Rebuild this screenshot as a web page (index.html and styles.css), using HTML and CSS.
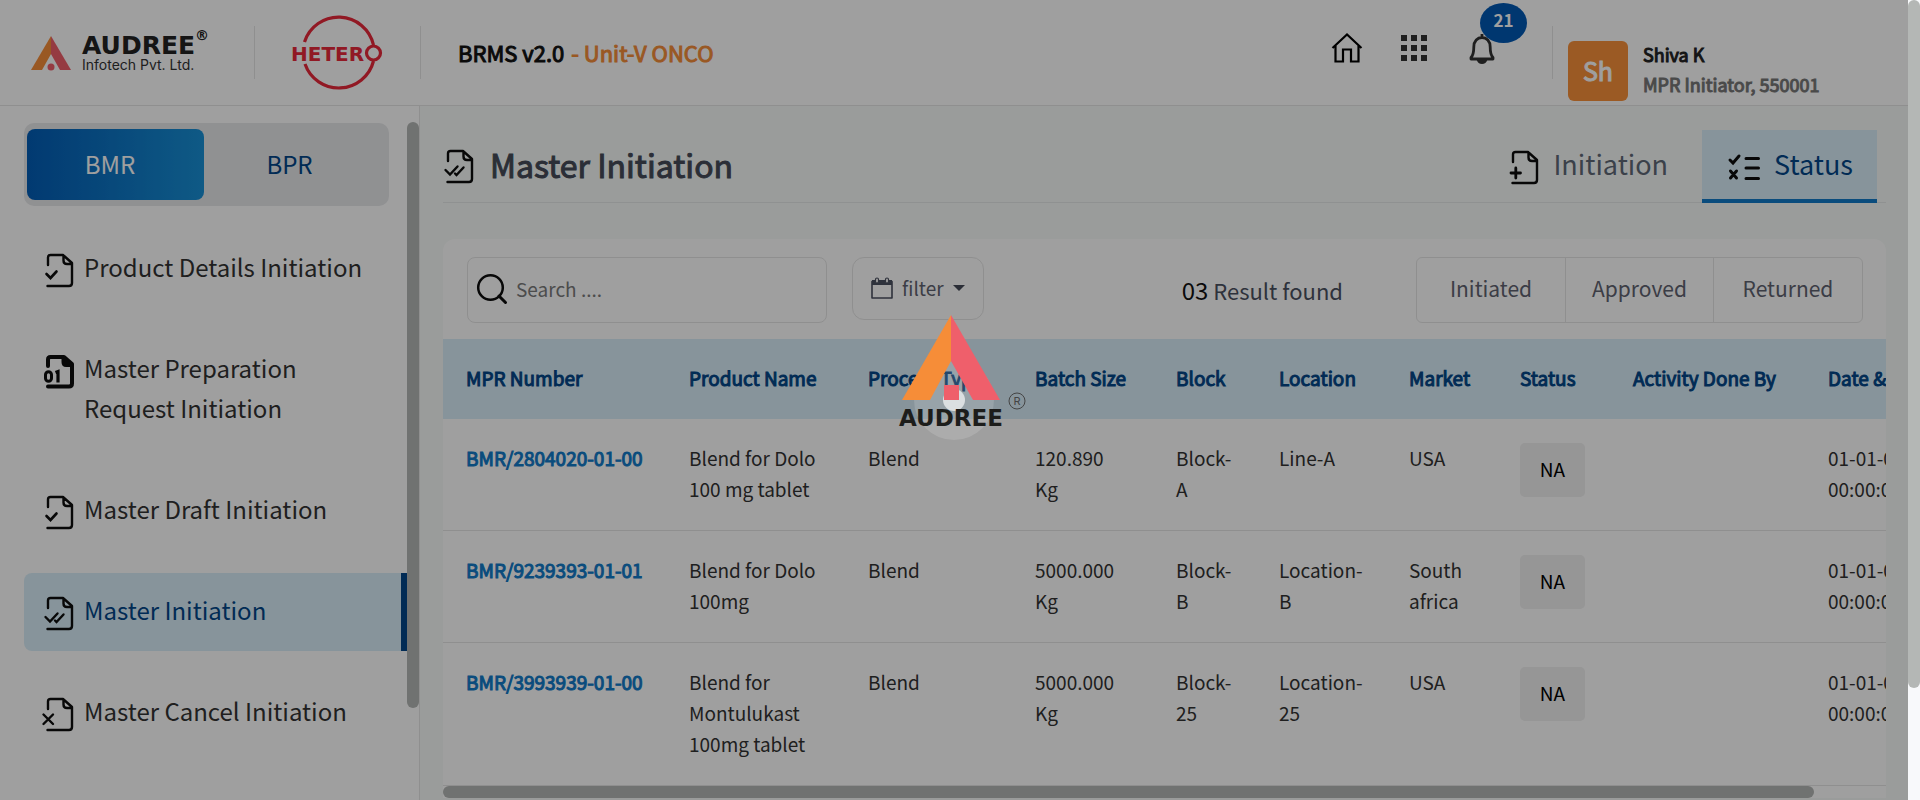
FILE: index.html
```html
<!DOCTYPE html>
<html lang="en">
<head>
<meta charset="utf-8">
<title>BRMS - Master Initiation</title>
<link rel="stylesheet" href="styles.css">
</head>
<body>
<svg class="defs" width="0" height="0" aria-hidden="true">
  <symbol id="doc" viewBox="0 0 34 36">
    <path d="M8 13V5.500Q8 3 10.500 3H23L32 11V31Q32 34 29 34H7.500M23.500 3.500V8.500Q23.500 12 27 12H31.500" fill="none" stroke="currentColor" stroke-width="2.400" stroke-linecap="round" stroke-linejoin="round"/>
  </symbol>
  <symbol id="doc-check" viewBox="0 0 34 36">
    <use href="#doc"/>
    <path d="M6.500 22L10.500 26L16.500 19.500" fill="none" stroke="currentColor" stroke-width="2.600" stroke-linecap="round"/>
  </symbol>
  <symbol id="doc-checks" viewBox="0 0 34 36">
    <use href="#doc"/>
    <path d="M5.500 22L10 26.500L17.500 18.500M15 25.500L16.500 27L23.500 19.500" fill="none" stroke="currentColor" stroke-width="2.400" stroke-linecap="round"/>
  </symbol>
  <symbol id="doc-x" viewBox="0 0 34 36">
    <use href="#doc"/>
    <path d="M3.500 18.500L13 28M13 18.500L3.500 28" fill="none" stroke="currentColor" stroke-width="2.400" stroke-linecap="round"/>
  </symbol>
  <symbol id="doc-plus" viewBox="0 0 34 36">
    <use href="#doc"/>
    <path d="M6 24H15.500M10.800 19V29" fill="none" stroke="currentColor" stroke-width="2.800" stroke-linecap="round"/>
  </symbol>
  <symbol id="doc-binary" viewBox="0 0 34 36">
    <path d="M8 13V6.500Q8 4 10.500 4H24L32 11V30.500Q32 33.500 29 33.500H8" fill="none" stroke="currentColor" stroke-width="4" stroke-linecap="round" stroke-linejoin="round"/>
    <path d="M21.500 4V9Q21.500 14 26 14H33V11L25 4Z" fill="currentColor"/>
    <rect x="5.500" y="18.700" width="6" height="9.600" rx="3" fill="none" stroke="currentColor" stroke-width="3"/>
    <path d="M15.500 19.500L18 18.500V29.500" fill="none" stroke="currentColor" stroke-width="3.200"/>
  </symbol>
</svg>

<div class="page">
<header class="topbar">
  <a class="brand" href="#">
    <svg class="brand-mark" viewBox="0 0 40 34" aria-hidden="true">
      <path d="M20 0L0 34H11L20 18Z" fill="#f68d38"/><path d="M20 0L40 34H29L20 18Z" fill="#ef5f6b"/><circle cx="20" cy="31" r="3.500" fill="#ef5f6b"/>
    </svg>
    <span class="brand-text"><span class="brand-name">AUDREE<span class="brand-reg">®</span></span><span class="brand-sub">Infotech Pvt. Ltd.</span></span>
  </a>
  <div class="client">
    <svg class="hetero" viewBox="0 0 92 76" role="img" aria-label="Hetero">
      <path d="M12.500 28A35.800 35.800 0 0 1 81.500 31M81.500 47A35.800 35.800 0 0 1 13 50" fill="none" stroke="#e8283a" stroke-width="3.200"/>
      <text x="-1" y="47" class="hetero-text">HETER</text>
      <circle cx="81.500" cy="39" r="7" fill="none" stroke="#e8283a" stroke-width="3.200"/>
    </svg>
  </div>
  <p class="app-title">BRMS v2.0 <span class="unit">- Unit-V ONCO</span></p>
  <div class="actions">
    <a href="#" aria-label="Home"><svg class="ic-home" viewBox="0 0 32 30"><path d="M1.500 15L16 1.500L30.500 15M4.500 12.500V28.500H12V16.500H20V28.500H27.500V12.500" fill="none" stroke="#000" stroke-width="2.200"/></svg></a>
    <a href="#" aria-label="Apps"><svg class="ic-grid" viewBox="0 0 26 26"><path d="M0 0h6v6H0zM10 0h6v6h-6zM20 0h6v6h-6zM0 10h6v6H0zM10 10h6v6h-6zM20 10h6v6h-6zM0 20h6v6H0zM10 20h6v6h-6zM20 20h6v6h-6z" fill="#333"/></svg></a>
    <button class="bell" type="button" aria-label="Notifications">
      <svg class="ic-bell" viewBox="0 0 26 32"><path d="M13 1V4M2 24.500C4.500 22 4.800 18.500 4.800 14C4.800 8 8.500 4.500 13 4.500S21.200 8 21.200 14C21.200 18.500 21.500 22 24 24.500V26H2Z" fill="none" stroke="#333" stroke-width="2.800" stroke-linejoin="round"/><path d="M7.500 26.500Q9 31 13 31T18.500 26.500Z" fill="#333"/></svg>
      <span class="count">21</span>
    </button>
  </div>
  <div class="user">
    <span class="avatar">Sh</span>
    <div><p class="user-name">Shiva K</p><p class="user-role">MPR Initiator, 550001</p></div>
  </div>
</header>

<div class="layout">
  <aside class="sidebar">
    <div class="sidebar-scroll">
      <div class="switch"><button class="switch-btn is-on" type="button">BMR</button><button class="switch-btn" type="button">BPR</button></div>
      <nav class="menu">
        <a class="menu-item" href="#"><svg class="doc-icon"><use href="#doc-check"/></svg><span>Product Details Initiation</span></a>
        <a class="menu-item" href="#"><svg class="doc-icon"><use href="#doc-binary"/></svg><span>Master Preparation Request Initiation</span></a>
        <a class="menu-item" href="#"><svg class="doc-icon"><use href="#doc-check"/></svg><span>Master Draft Initiation</span></a>
        <a class="menu-item is-active" href="#"><svg class="doc-icon"><use href="#doc-checks"/></svg><span>Master Initiation</span></a>
        <a class="menu-item" href="#"><svg class="doc-icon"><use href="#doc-x"/></svg><span>Master Cancel Initiation</span></a>
      </nav>
    </div>
    <div class="rail rail-side"><div class="thumb"></div></div>
  </aside>

  <main class="main">
    <div class="page-head">
      <h1 class="page-title"><svg class="doc-icon"><use href="#doc-checks"/></svg><span class="strong">Master Initiation</span></h1>
      <nav class="tabs">
        <a class="tab" href="#"><svg class="doc-icon"><use href="#doc-plus"/></svg><span>Initiation</span></a>
        <a class="tab is-active" href="#"><svg class="ic-list" viewBox="0 0 32 27"><path d="M2 6L5 9L11 2M18 4.500H30.500M18 14H30.500M18 24.500H30.500M2.500 17L8.500 24M8.500 17L2.500 24" fill="none" stroke="#0d0d0d" stroke-width="3" stroke-linecap="round"/></svg><span>Status</span></a>
      </nav>
    </div>

    <section class="card">
      <div class="toolbar">
        <label class="search"><svg class="ic-search" viewBox="0 0 30 30"><circle cx="13.500" cy="13.500" r="12.300" fill="none" stroke="#0d0d0d" stroke-width="2.500"/><path d="M22 22L28.500 28.500" stroke="#0d0d0d" stroke-width="3" stroke-linecap="round"/></svg><input type="search" placeholder="Search ...." aria-label="Search"></label>
        <button class="filter" type="button"><svg class="ic-cal" viewBox="0 0 22 22"><path d="M1 4.500H21V21H1Z" fill="none" stroke="#4b5060" stroke-width="1.600" stroke-linejoin="round"/><path d="M1 3H21V8H1Z" fill="#4b5060"/><rect x="4.500" y="1" width="3" height="5" rx="1.500" fill="#fff" stroke="#4b5060" stroke-width="1.200"/><rect x="14.500" y="1" width="3" height="5" rx="1.500" fill="#fff" stroke="#4b5060" stroke-width="1.200"/></svg>filter<span class="caret"></span></button>
        <p class="results"><span class="results-count">03</span> Result found</p>
        <div class="segments"><button type="button">Initiated</button><button type="button">Approved</button><button type="button">Returned</button></div>
      </div>
      <div class="table-scroll">
        <table class="grid">
          <colgroup><col class="w-mpr"><col class="w-product"><col class="w-process"><col class="w-batch"><col class="w-block"><col class="w-location"><col class="w-market"><col class="w-status"><col class="w-done"><col class="w-date"></colgroup>
          <thead><tr><th>MPR Number</th><th>Product Name</th><th>Process Type</th><th>Batch Size</th><th>Block</th><th>Location</th><th>Market</th><th>Status</th><th>Activity Done By</th><th>Date &amp; Time</th></tr></thead>
          <tbody>
            <tr><td><a href="#">BMR/2804020-01-00</a></td><td>Blend for Dolo 100 mg tablet</td><td>Blend</td><td>120.890 Kg</td><td>Block-A</td><td>Line-A</td><td>USA</td><td class="status"><span class="pill">NA</span></td><td></td><td>01-01-0001 00:00:00</td></tr>
            <tr><td><a href="#">BMR/9239393-01-01</a></td><td>Blend for Dolo 100mg</td><td>Blend</td><td>5000.000 Kg</td><td>Block-B</td><td>Location-B</td><td>South africa</td><td class="status"><span class="pill">NA</span></td><td></td><td>01-01-0001 00:00:00</td></tr>
            <tr><td><a href="#">BMR/3993939-01-00</a></td><td>Blend for Montulukast 100mg tablet</td><td>Blend</td><td>5000.000 Kg</td><td>Block-25</td><td>Location-25</td><td>USA</td><td class="status"><span class="pill">NA</span></td><td></td><td>01-01-0001 00:00:00</td></tr>
          </tbody>
        </table>
      </div>
      <div class="rail rail-table"><div class="thumb"></div></div>
    </section>
  </main>
</div>

<div class="overlay" role="status" aria-label="Loading">
  <svg class="loader" viewBox="0 0 130 126">
    <circle cx="54" cy="86" r="40" fill="#fff" fill-opacity=".14"/>
    <circle cx="54" cy="86" r="11" fill="#fff" fill-opacity=".65"/>
    <path d="M51 1L2 86H30L51 47Z" fill="#f68d38"/><path d="M51 1L100 86H73L51 47Z" fill="#ef5f6b"/>
    <path d="M44 71H59V86H44Z" fill="#ef5f6b"/>
    <text x="-1" y="112" class="loader-name">AUDREE</text>
    <circle cx="117" cy="87" r="8" fill="none" stroke="#444" stroke-width="1"/>
    <text x="117" y="91" class="loader-reg">R</text>
  </svg>
</div>
</div>
<div class="rail rail-page"><div class="thumb"></div></div>
</body>
</html>
```

FILE: styles.css
```css
* { box-sizing: border-box; }

body {
  margin: 0;
  height: 100vh;
  overflow: hidden;
  display: grid;
  grid-template-columns: minmax(0, 1fr) 12px;
  grid-template-rows: 100vh;
  background: #f8f9fb;
  color: #333;
  font-family: "Noto Sans CJK SC", "Noto Sans", sans-serif;
  font-size: 19px;
  line-height: 31px;
}

p, h1 { margin: 0; }
a { color: inherit; text-decoration: none; }
button { font: inherit; color: inherit; background: none; border: 0; padding: 0; }
svg { display: block; flex: none; overflow: visible; }
.defs { position: absolute; }
.doc-icon { width: 34px; height: 36px; color: #0d0d0d; }

/* Scroll rails */
.thumb { border-radius: 6px; background: #b4b7b5; }
.rail-page .thumb { height: 86%; }
.rail-side .thumb { height: 586px; }
.rail-table .thumb { width: 95%; height: 12px; }

/* Top bar */
.page {
  position: relative;
  display: flex;
  flex-direction: column;
  overflow: hidden;
  background: #f7fbf9;
}
.topbar {
  flex: none;
  display: flex;
  align-items: flex-start;
  height: 106px;
  background: #fff;
  border-bottom: 1px solid #e6e6e6;
}
.brand {
  display: flex;
  gap: 11px;
  width: 255px;
  height: 53px;
  margin-top: 26px;
  padding: 10px 0 0 31px;
  border-right: 1px solid #e6e6e6;
}
.brand-mark { width: 40px; height: 34px; }
.brand-text { display: flex; flex-direction: column; }
.brand-name { position: relative; font: 700 25px/20px "DejaVu Sans", sans-serif; color: #222; }
.brand-reg { position: absolute; left: 100%; top: -8px; font-size: 14px; line-height: 14px; }
.brand-sub { font: 14px/18px Inter, sans-serif; color: #333; white-space: nowrap; }
.client { width: 166px; height: 53px; margin-top: 26px; padding-left: 37px; border-right: 1px solid #e6e6e6; }
.hetero { width: 92px; height: 76px; margin-top: -12px; }
.hetero-text { font: 700 20px "DejaVu Sans", sans-serif; fill: #e8283a; }
.app-title { padding: 37px 0 0 37px; font-size: 22px; color: #111; white-space: pre; -webkit-text-stroke: 1px; }
.unit { margin-left: 2px; color: #f68d38; }
.actions { display: flex; align-items: flex-start; gap: 38px; margin-left: auto; padding-top: 33px; }
.ic-home { width: 32px; height: 30px; }
.ic-grid { width: 26px; height: 26px; margin-top: 2px; }
.bell { position: relative; width: 26px; margin-left: 4px; }
.ic-bell { width: 26px; height: 32px; }
.count {
  position: absolute;
  left: 11px;
  bottom: 22px;
  width: 47px;
  height: 40px;
  border-radius: 50%;
  background: #0058b4;
  color: #fff;
  font-size: 17px;
  line-height: 34px;
  font-weight: 700;
}
.user { display: flex; gap: 15px; width: 356px; height: 53px; margin: 26px 0 0 57px; padding: 15px 0 0 15px; border-left: 1px solid #e6e6e6; }
.avatar { flex: none; width: 60px; height: 60px; border-radius: 6px; background: #f9913a; color: #fff; font-size: 25px; line-height: 58px; text-align: center; -webkit-text-stroke: 1px; }
.user-name, .user-role { font-size: 18px; line-height: 30px; -webkit-text-stroke: 1px; }
.user-name { color: #222; margin-top: -2px; }
.user-role { color: #777; }

/* Sidebar */
.layout { flex: 1; min-height: 0; display: grid; grid-template-columns: 420px minmax(0, 1fr); }
.sidebar { display: grid; grid-template-columns: minmax(0, 1fr) 12px; background: #fff; border-right: 1px solid #e6e6e6; padding-top: 16px; min-height: 0; }
.sidebar-scroll { min-height: 0; overflow: hidden; padding: 1px 0 0 24px; }
.switch { display: grid; grid-template-columns: 177px 1fr; height: 83px; margin-right: 18px; padding: 6px 3px; border-radius: 10px; background: #e7e8eb; }
.switch-btn { padding: 0 11px 2px 0; border-radius: 8px; font-size: 24px; color: #024688; }
.switch-btn.is-on { background: linear-gradient(90deg, #035db6, #1890d6); color: #fff; }
.menu { display: flex; flex-direction: column; gap: 23px; margin-top: 24px; }
.menu-item { display: flex; align-items: flex-start; gap: 10px; padding: 17px 20px 21px 16px; font-size: 24px; line-height: 40px; border-right: 6px solid transparent; }
.menu-item .doc-icon { margin: 5px 0 -1px; }
.menu-item.is-active { border-right-color: #024688; border-radius: 8px 0 0 8px; background: #d9eef9; color: #024688; }

/* Main */
.main { min-height: 0; padding: 24px 22px 0 23px; }
.page-head { display: flex; justify-content: space-between; height: 73px; border-bottom: 1px solid #e6e9e8; }
.page-title { display: flex; align-items: center; gap: 16px; margin-left: -3px; color: #454b58; font-size: 32px; font-weight: 400; }
.page-title .strong { padding-bottom: 3px; -webkit-text-stroke: 1px; }
.tabs { display: flex; gap: 16px; margin-right: 9px; }
.tab { display: flex; align-items: center; gap: 14px; height: 73px; padding: 0 18px; font-size: 27px; color: #5f6877; border-bottom: 4px solid transparent; }
.tab svg { margin-top: 5px; }
.tab span { padding-bottom: 2px; }
.tab.is-active { padding: 0 24px 0 26px; background: #d9eef9; color: #024688; border-bottom-color: #107ac8; }
.ic-list { width: 32px; height: 27px; }

.card { margin-top: 36px; border-radius: 12px 12px 0 0; background: #fff; }
.toolbar { display: flex; align-items: flex-start; height: 100px; padding: 18px 23px 0 24px; }
.search { display: flex; align-items: center; gap: 9px; width: 360px; height: 66px; padding: 0 9px 3px; border: 1px solid #e6e6e6; border-radius: 8px; }
.ic-search { width: 30px; height: 30px; }
.search input { flex: 1; min-width: 0; padding: 0; border: 0; outline: 0; background: none; font: inherit; }
.search input::placeholder { color: #7a7a7a; }
.filter { display: flex; align-items: center; gap: 9px; height: 63px; margin-left: 25px; padding: 0 18px 2px; border: 1px solid #e6e6e6; border-radius: 12px; color: #5f6370; }
.ic-cal { width: 22px; height: 22px; }
.caret { border: 6px solid transparent; border-top-color: #454b58; border-bottom: 0; }
.results { margin: 17px 73px 0 auto; font-size: 22px; color: #4b5060; }
.results-count { font-size: 24px; color: #111; }
.segments { display: grid; grid-template-columns: 148px 148px 149px; height: 66px; border: 1px solid #e6e6e6; border-radius: 6px; color: #5f6370; font-size: 21px; }
.segments button { padding-bottom: 3px; }
.segments button + button { border-left: 1px solid #e6e6e6; }

.table-scroll { overflow: hidden; }
.grid { width: 1520px; table-layout: fixed; border-collapse: separate; border-spacing: 0; }
.grid th, .grid td { text-align: left; vertical-align: top; padding: 23px 23px 26px; font-weight: 400; }
.grid th { color: #024688; background: #d9eef9; white-space: nowrap; -webkit-text-stroke: 1px; }
.grid td { border-bottom: 1px solid #e6e6e6; }
.grid td a { color: #107ac8; white-space: nowrap; -webkit-text-stroke: 1px; }
.grid .status { padding-top: 24px; padding-bottom: 0; }
.pill { display: inline-block; width: 65px; padding-bottom: 2px; border-radius: 5px; background: #f0f0f0; color: #000; line-height: 52px; text-align: center; }
.w-mpr { width: 223px; }
.w-product { width: 179px; }
.w-process { width: 167px; }
.w-batch { width: 141px; }
.w-block { width: 103px; }
.w-location { width: 130px; }
.w-market { width: 111px; }
.w-status { width: 113px; }
.w-done { width: 195px; }

/* Loading layer */
.overlay { position: absolute; inset: 0; background: rgba(0, 0, 0, .375); display: grid; place-items: center; }
.loader { width: 130px; height: 126px; margin: -46px 0 0 22px; }
.loader-name { font: 700 23px "DejaVu Sans", sans-serif; fill: #1d1d1b; }
.loader-reg { font: 11px Inter, sans-serif; fill: #444; text-anchor: middle; }
```
